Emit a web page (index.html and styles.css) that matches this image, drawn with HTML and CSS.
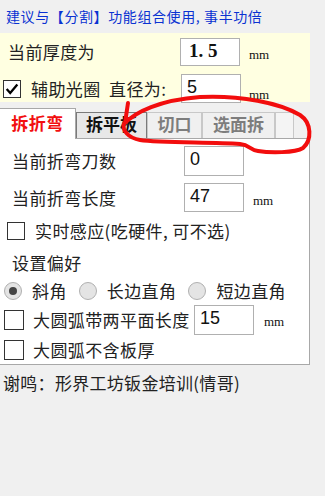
FILE: index.html
```html
<!DOCTYPE html>
<html>
<head>
<meta charset="utf-8">
<link rel="stylesheet" href="styles.css">
</head>
<body>
<div class="page">
  <div class="tip">建议与【分割】功能组合使用, 事半功倍</div>
  <div class="yellow">
    <div class="row r1">
      <span class="lbl w172">当前厚度为</span>
      <span class="inp bold">1. 5</span>
      <span class="mm">mm</span>
    </div>
    <div class="row r2">
      <span class="cb checked"><svg viewBox="0 0 18 18" width="16" height="16"><path d="M3 9 L7 13.5 L15 4" fill="none" stroke="#000" stroke-width="2.6"/></svg></span>
      <span class="lbl w150">辅助光圈&nbsp;&nbsp;直径为:</span>
      <span class="inp h29">5</span>
      <span class="mm mm2">mm</span>
    </div>
  </div>
  <div class="tabs">
    <div class="tab active">拆折弯</div>
    <div class="tab t2">拆平板</div>
    <div class="tab t3 dim">切口</div>
    <div class="tab t4 dim">选面拆</div>
    <div class="tab t5"></div>
  </div>
  <div class="panel">
    <div class="row ra">
      <span class="lbl w172 ml12">当前折弯刀数</span>
      <span class="inp h30">0</span>
    </div>
    <div class="row rb">
      <span class="lbl w172 ml12">当前折弯长度</span>
      <span class="inp h29">47</span>
      <span class="mm">mm</span>
    </div>
    <div class="row rc">
      <span class="cb ml7"></span>
      <span class="lbl ml10">实时感应(吃硬件, 可不选)</span>
    </div>
    <div class="row rd">
      <span class="lbl ml12">设置偏好</span>
    </div>
    <div class="row re">
      <span class="radio on"></span><span class="lbl rl">斜角</span>
      <span class="radio r2m"></span><span class="lbl rl2">长边直角</span>
      <span class="radio r3m"></span><span class="lbl rl2">短边直角</span>
    </div>
    <div class="row rf">
      <span class="cb cb19 ml4"></span>
      <span class="lbl ml9 w161">大圆弧带两平面长度</span>
      <span class="inp h30">15</span>
      <span class="mm mm3">mm</span>
    </div>
    <div class="row rg">
      <span class="cb cb19 ml4"></span>
      <span class="lbl ml9">大圆弧不含板厚</span>
    </div>
  </div>
  <div class="thanks">谢鸣：形界工坊钣金培训(情哥)</div>
  <svg class="annot" width="325" height="496" viewBox="0 0 325 496">
    <path d="M128,103 L125,123 M124,124 C135,112 160,100 200,97 C240,95 280,103 300,115 C312,123 312,140 303,148 C295,153 270,153 258,151 C250,150 250,145 240,144 C210,142 160,143 140,140 C128,138 122,130 124,124" fill="none" stroke="#f20d0d" stroke-width="4" stroke-linecap="round" stroke-linejoin="round"/>
  </svg>
</div>
</body>
</html>
```

FILE: styles.css
```css
html, body {
  margin: 0;
  padding: 0;
  background: #f0f0f0;
}
.page {
  position: relative;
  width: 325px;
  height: 496px;
  overflow: hidden;
  font-family: "Noto Sans CJK SC", "Noto Sans", sans-serif;
  color: #222;
}
.tip {
  font-size: 14px;
  line-height: 18px;
  letter-spacing: 0.6px;
  color: #0a32d2;
  padding: 7px 0 0 6px;
  height: 26px;
  box-sizing: border-box;
}
.yellow {
  margin-top: 7px;
  width: 310px;
  height: 69px;
  background: #ffffe1;
  padding-top: 5px;
  box-sizing: border-box;
}
.row {
  display: flex;
  align-items: center;
}
.lbl {
  font-size: 17px;
  line-height: 20px;
  letter-spacing: 0.4px;
  white-space: nowrap;
  flex: none;
}
.w172 { width: 172px; }
.w150 { width: 150px; margin-left: 10px; }
.w161 { width: 161px; }
.ml12 { margin-left: 12px; }
.ml10 { margin-left: 10px; }
.ml9 { margin-left: 9px; }
.ml7 { margin-left: 7px; }
.ml4 { margin-left: 4px; }
.r1 { height: 28px; padding-left: 8px; }
.r2 { margin-top: 8px; height: 29px; padding-left: 3px; }
.inp {
  flex: none;
  width: 60px;
  height: 28px;
  box-sizing: border-box;
  border: 1px solid #b0b0b0;
  background: #fff;
  font-family: "Liberation Sans", Arial, sans-serif;
  font-size: 18px;
  line-height: 24px;
  padding-left: 5px;
  color: #111;
}
.inp.bold {
  font-family: "Liberation Serif", serif;
  font-weight: bold;
  font-size: 19px;
  padding-left: 8px;
}
.h29 { height: 29px; }
.h30 { height: 30px; }
.mm {
  font-family: "Liberation Serif", serif;
  font-size: 13px;
  color: #111;
  margin-left: 9px;
  margin-top: 6px;
}
.mm2 { margin-top: 12px; margin-left: 8px; }
.mm3 { margin-left: 10px; margin-top: 4px; }
.cb {
  flex: none;
  width: 18px;
  height: 18px;
  box-sizing: border-box;
  border: 1px solid #333;
  background: #fff;
  display: flex;
  align-items: center;
  justify-content: center;
}
.cb19 { width: 20px; height: 20px; }
.tabs {
  margin-top: 6px;
  height: 30px;
  display: flex;
  align-items: flex-end;
  position: relative;
  z-index: 1;
}
.tab {
  flex: none;
  box-sizing: border-box;
  height: 26px;
  font-size: 17px;
  line-height: 22px;
  font-weight: bold;
  text-align: center;
  background: #f0f0f0;
  border: 1px solid #c8c8c8;
  border-bottom: none;
  margin-bottom: 0;
}
.tab.active {
  width: 76px;
  height: 31px;
  margin-bottom: -1px;
  background: #fff;
  color: #f21010;
  border: 1px solid #a8a8a8;
  border-left: none;
  border-bottom: none;
  line-height: 28px;
  letter-spacing: 0.5px;
}
.t2 {
  width: 71px;
  border: 1px solid #7a7a7a;
  border-bottom: none;
  background: #e8e8e8;
  color: #111;
}
.t3 { width: 55px; }
.t4 { width: 73px; }
.t5 { width: 19px; background: #f4f4f4; }
.dim { color: #7d7d7d; font-weight: 600; }
.panel {
  width: 310px;
  height: 227px;
  box-sizing: border-box;
  background: #fff;
  border: 1px solid #a8a8a8;
  border-left: none;
  padding-top: 7px;
}
.ra { height: 30px; }
.rb { margin-top: 7px; height: 29px; }
.rc { margin-top: 9px; height: 20px; }
.rd { margin-top: 12px; height: 20px; }
.re { margin-top: 8px; height: 20px; }
.rf { margin-top: 4px; height: 30px; }
.rg { margin-top: 5px; height: 20px; }
.radio {
  flex: none;
  width: 18px;
  height: 18px;
  box-sizing: border-box;
  border-radius: 50%;
  border: 1px solid #b0b0b0;
  background: #e4e4e4;
  margin-left: 4px;
  position: relative;
}
.radio.on::after {
  content: "";
  position: absolute;
  left: 4px;
  top: 4px;
  width: 8px;
  height: 8px;
  border-radius: 50%;
  background: #444;
}
.rl { margin-left: 10px; }
.r2m { margin-left: 12px; }
.r3m { margin-left: 12px; }
.rl2 { margin-left: 10px; }
.thanks {
  font-size: 17px;
  line-height: 20px;
  letter-spacing: 0.3px;
  padding: 8px 0 0 3px;
  color: #222;
}
.annot {
  position: absolute;
  left: 0;
  top: 0;
  pointer-events: none;
  z-index: 5;
}
```
